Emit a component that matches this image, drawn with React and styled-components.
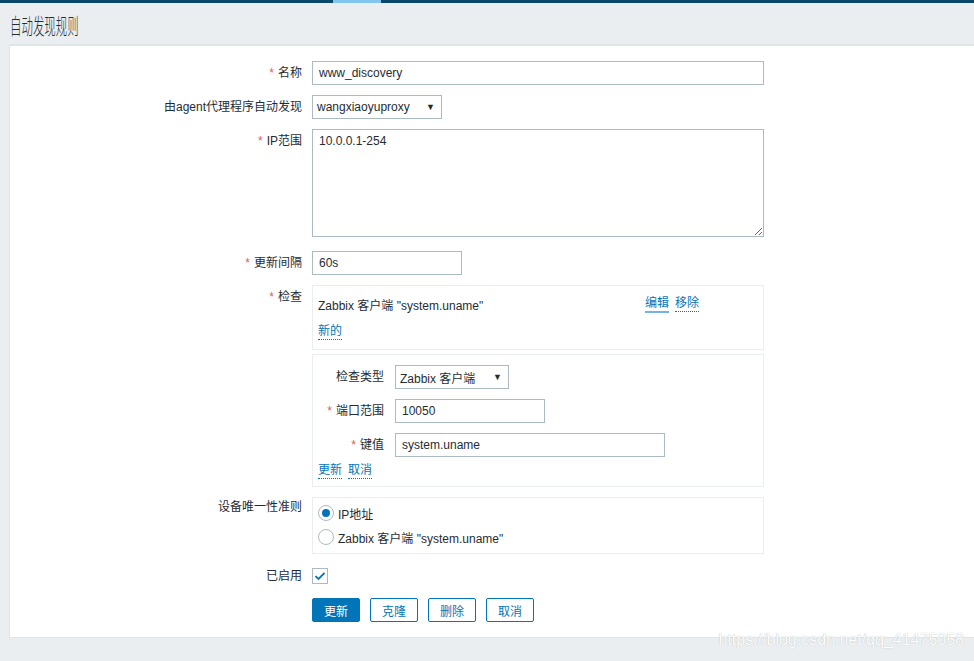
import React from "react";
import styled, { createGlobalStyle } from "styled-components";

const Global = createGlobalStyle`
  html, body { margin: 0; padding: 0; background: #ebeef0; }
  body {
    font-family: "Liberation Sans", Arial, "Noto Sans CJK SC", sans-serif;
    font-size: 12px;
    color: #1f2c33;
  }
  * { box-sizing: border-box; }
`;

const Page = styled.div`
  position: relative;
  min-height: 661px;
  overflow: hidden;
`;

const TopBar = styled.div`
  height: 3px;
  background: #0b466b;
  display: flex;
`;

const TopBarActive = styled.div`
  margin-left: 333px;
  width: 48px;
  background: #80c6f1;
`;

const Header = styled.div`
  height: 41px;
  padding-left: 10px;
  display: flex;
  align-items: center;
`;

const Title = styled.h1`
  margin: 0;
  font-weight: 300;
  font-size: 22px;
  line-height: 24px;
  color: #1f2c33;
  display: inline-block;
  transform: scaleX(0.52);
  transform-origin: left center;
  font-family: "Noto Sans CJK SC", sans-serif;
`;

const Panel = styled.div`
  margin-left: 9px;
  margin-right: -10px;
  background: #fff;
  border: 1px solid #dfe4e7;
  border-top-width: 2px;
  padding: 15px 0 15px 0;
`;

const Form = styled.div`
  display: grid;
  grid-template-columns: 292px 1fr;
  column-gap: 10px;
  row-gap: 10px;
  align-items: start;
`;

const Label = styled.div`
  text-align: right;
  line-height: ${(p) => (p.$lh ? p.$lh : 24)}px;
  white-space: nowrap;
`;

const Star = styled.span`
  color: #e45959;
  margin-right: 4px;
`;

const Field = styled.div`
  display: flex;
  flex-direction: column;
  gap: ${(p) => p.$gap || 0}px;
  padding-bottom: ${(p) => p.$pb || 0}px;
`;

const Input = styled.div`
  width: ${(p) => p.$w}px;
  height: 24px;
  border: 1px solid #acbbc2;
  background: #fff;
  padding: 0 6px;
  line-height: 22px;
  white-space: nowrap;
`;

const TextArea = styled.textarea`
  display: block;
  width: 452px;
  height: 108px;
  border: 1px solid #acbbc2;
  padding: 4px 6px;
  font: inherit;
  color: inherit;
  resize: vertical;
  outline: none;
`;

const Select = styled.div`
  width: ${(p) => p.$w}px;
  height: 24px;
  border: 1px solid #acbbc2;
  background: #fff;
  padding: 0 6px 0 4px;
  display: flex;
  align-items: center;
  justify-content: space-between;
  white-space: nowrap;
`;

const Arrow = styled.span`
  font-size: 9px;
  color: #1f2c33;
`;

const Box = styled.div`
  width: 452px;
  border: 1px solid #ebeef0;
  padding: ${(p) => p.$pad};
`;

const CheckRow = styled.div`
  display: flex;
  align-items: center;
  height: 24px;
`;

const CheckName = styled.div`
  width: 327px;
`;

const Actions = styled.div`
  display: flex;
  align-items: center;
  gap: 6px;
`;

const LinkText = styled.span`
  display: inline-block;
  color: #0275b8;
  line-height: 15px;
  border-bottom: ${(p) => (p.$solid ? "2px solid #72b3e0" : "1px dotted #0275b8")};
  cursor: pointer;
`;

const LinkLine = styled.div`
  display: flex;
  align-items: center;
  gap: 6px;
  height: 24px;
  margin-top: ${(p) => p.$mt || 0}px;
`;

const SubForm = styled.div`
  display: grid;
  grid-template-columns: 66px 1fr;
  column-gap: 11px;
  row-gap: 10px;
`;

const RadioRow = styled.div`
  display: flex;
  align-items: center;
  gap: 4px;
  height: 24px;
`;

const RadioCircle = styled.span`
  width: 16px;
  height: 16px;
  border-radius: 50%;
  border: 1px solid #acbbc2;
  display: flex;
  align-items: center;
  justify-content: center;
  &::after {
    content: "";
    width: 8px;
    height: 8px;
    border-radius: 50%;
    background: ${(p) => (p.$on ? "#0275b8" : "transparent")};
  }
`;

const CheckCell = styled.div`
  height: 24px;
  display: flex;
  align-items: center;
`;

const Checkbox = styled.span`
  width: 16px;
  height: 16px;
  border: 1px solid #acbbc2;
  display: flex;
  align-items: center;
  justify-content: center;
`;

const Buttons = styled.div`
  display: flex;
  gap: 10px;
`;

const Button = styled.button`
  width: 48px;
  height: 24px;
  border-radius: 2px;
  border: 1px solid #0275b8;
  background: ${(p) => (p.$primary ? "#0275b8" : "#fff")};
  color: ${(p) => (p.$primary ? "#fff" : "#0275b8")};
  font: inherit;
  padding: 0;
  cursor: pointer;
`;

const Watermark = styled.div`
  position: absolute;
  right: 10px;
  top: 631px;
  font-size: 16px;
  color: #fdfdfd;
  text-shadow: 0 0 1px #a9b0b5;
  font-family: "Liberation Sans", Arial, sans-serif;
`;

function Req({ children }) {
  return (
    <Label>
      <Star>*</Star>
      {children}
    </Label>
  );
}

export default function App() {
  return (
    <Page>
      <Global />
      <TopBar>
        <TopBarActive />
      </TopBar>
      <Header>
        <Title>自动发现规则</Title>
      </Header>
      <Panel>
        <Form>
          <Req>名称</Req>
          <Field>
            <Input $w={452}>www_discovery</Input>
          </Field>

          <Label>由agent代理程序自动发现</Label>
          <Field>
            <Select $w={130}>
              wangxiaoyuproxy
              <Arrow>▼</Arrow>
            </Select>
          </Field>

          <Req>IP范围</Req>
          <Field $pb={4}>
            <TextArea defaultValue="10.0.0.1-254" />
          </Field>

          <Req>更新间隔</Req>
          <Field>
            <Input $w={150}>60s</Input>
          </Field>

          <Req>检查</Req>
          <Field $gap={4}>
            <Box $pad="6px 5px 5px 5px">
              <CheckRow>
                <CheckName>Zabbix 客户端 "system.uname"</CheckName>
                <Actions>
                  <LinkText $solid>编辑</LinkText>
                  <LinkText>移除</LinkText>
                </Actions>
              </CheckRow>
              <LinkLine $mt={4}>
                <LinkText>新的</LinkText>
              </LinkLine>
            </Box>
            <Box $pad="10px 5px 3px 5px">
              <SubForm>
                <Label>检查类型</Label>
                <Select $w={114}>
                  Zabbix 客户端
                  <Arrow>▼</Arrow>
                </Select>
                <Req>端口范围</Req>
                <Input $w={150}>10050</Input>
                <Req>键值</Req>
                <Input $w={270}>system.uname</Input>
              </SubForm>
              <LinkLine $mt={2}>
                <LinkText>更新</LinkText>
                <LinkText>取消</LinkText>
              </LinkLine>
            </Box>
          </Field>

          <Label $lh={20}>设备唯一性准则</Label>
          <Field>
            <Box $pad="3px 5px 4px 5px">
              <RadioRow>
                <RadioCircle $on />
                IP地址
              </RadioRow>
              <RadioRow>
                <RadioCircle />
                Zabbix 客户端 "system.uname"
              </RadioRow>
            </Box>
          </Field>

          <Label>已启用</Label>
          <CheckCell>
            <Checkbox>
              <svg width="12" height="10" viewBox="0 0 12 10">
                <path
                  d="M1.5 5.2 L4.5 8 L10.5 1.8"
                  fill="none"
                  stroke="#0275b8"
                  strokeWidth="1.8"
                />
              </svg>
            </Checkbox>
          </CheckCell>

          <div />
          <Buttons>
            <Button $primary>更新</Button>
            <Button>克隆</Button>
            <Button>删除</Button>
            <Button>取消</Button>
          </Buttons>
        </Form>
      </Panel>
      <Watermark>https://blog.csdn.net/qq_41475058</Watermark>
    </Page>
  );
}
